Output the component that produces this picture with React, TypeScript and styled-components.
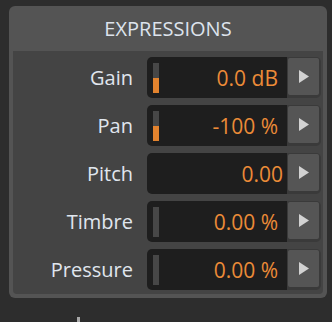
import React from 'react'
import styled, { createGlobalStyle } from 'styled-components'

type Expression = {
  name: string
  value: string
  level?: number | null
  tightValue?: boolean
}

const expressions: Expression[] = [
  { name: 'Gain', value: '0.0 dB', level: 0.5 },
  { name: 'Pan', value: '-100 %', level: 0.5 },
  { name: 'Pitch', value: '0.00', level: null, tightValue: true },
  { name: 'Timbre', value: '0.00 %', level: 0 },
  { name: 'Pressure', value: '0.00 %', level: 0 },
]

export default function App() {
  return (
    <>
      <GlobalStyle />
      <Page>
        <Panel>
          <Header>EXPRESSIONS</Header>
          <Body>
            {expressions.map((exp) => (
              <Row key={exp.name}>
                <Label>{exp.name}</Label>
                <Field>
                  <Display>
                    {exp.level != null && (
                      <Meter>
                        <MeterFill style={{ height: `${exp.level * 100}%` }} />
                      </Meter>
                    )}
                    <Value tight={exp.tightValue}>{exp.value}</Value>
                  </Display>
                  <ButtonFrame>
                    <ArrowButton>
                      <svg width="10" height="13" viewBox="0 0 10 13">
                        <path d="M0 0 L10 6.5 L0 13 Z" fill="#d2d2d2" />
                      </svg>
                    </ArrowButton>
                  </ButtonFrame>
                </Field>
              </Row>
            ))}
          </Body>
        </Panel>
        <Tick />
      </Page>
    </>
  )
}

const GlobalStyle = createGlobalStyle`
  html, body {
    margin: 0;
    padding: 0;
    background: #2d2d2d;
    font-family: "Open Sans", "Noto Sans", sans-serif;
  }
`

const Page = styled.div`
  width: 332px;
  height: 322px;
  overflow: hidden;
  padding: 6px 0 0 9px;
  box-sizing: border-box;
  background: #2d2d2d;
`

const Panel = styled.div`
  width: 318px;
  background: #545454;
  border-radius: 6px;
  padding: 0 4px 4px 4px;
  box-sizing: border-box;
  display: flex;
  flex-direction: column;
`

const Header = styled.div`
  height: 45px;
  display: flex;
  align-items: center;
  justify-content: center;
  font-size: 20px;
  color: #dde3ec;
`

const Body = styled.div`
  background: #444444;
  border-radius: 0 0 4px 4px;
  padding: 6px 2px 4px 0;
  display: flex;
  flex-direction: column;
  gap: 7px;
`

const Row = styled.div`
  display: grid;
  grid-template-columns: 120px 1fr;
  column-gap: 14px;
  align-items: center;
  height: 41px;
`

const Label = styled.div`
  text-align: right;
  font-size: 20px;
  color: #e0e6ee;
`

const Field = styled.div`
  display: flex;
  height: 41px;
`

const Display = styled.div`
  flex: 1;
  background: #1e1e1e;
  border-radius: 5px 0 0 5px;
  display: flex;
  align-items: center;
  padding: 0 0 0 6px;
`

const Meter = styled.div`
  width: 6px;
  height: 30px;
  background: #474747;
  display: flex;
  flex-direction: column;
  justify-content: flex-end;
`

const MeterFill = styled.div`
  width: 100%;
  background: #e3832e;
`

const Value = styled.div<{ tight?: boolean }>`
  margin-left: auto;
  padding-right: ${({ tight }) => (tight ? '4px' : '9px')};
  font-size: 21px;
  color: #ec8b38;
  white-space: nowrap;
`

const ButtonFrame = styled.div`
  width: 34px;
  background: #3a3a3a;
  border-radius: 0 5px 5px 0;
  padding: 1px 2px 3px 1px;
  box-sizing: border-box;
  display: flex;
`

const ArrowButton = styled.div`
  flex: 1;
  background: #555555;
  border-radius: 2px;
  display: flex;
  align-items: center;
  justify-content: center;
  padding-left: 1px;
`

const Tick = styled.div`
  width: 3px;
  height: 6px;
  margin: 19px 0 0 68px;
  background: #a9a9a9;
`
